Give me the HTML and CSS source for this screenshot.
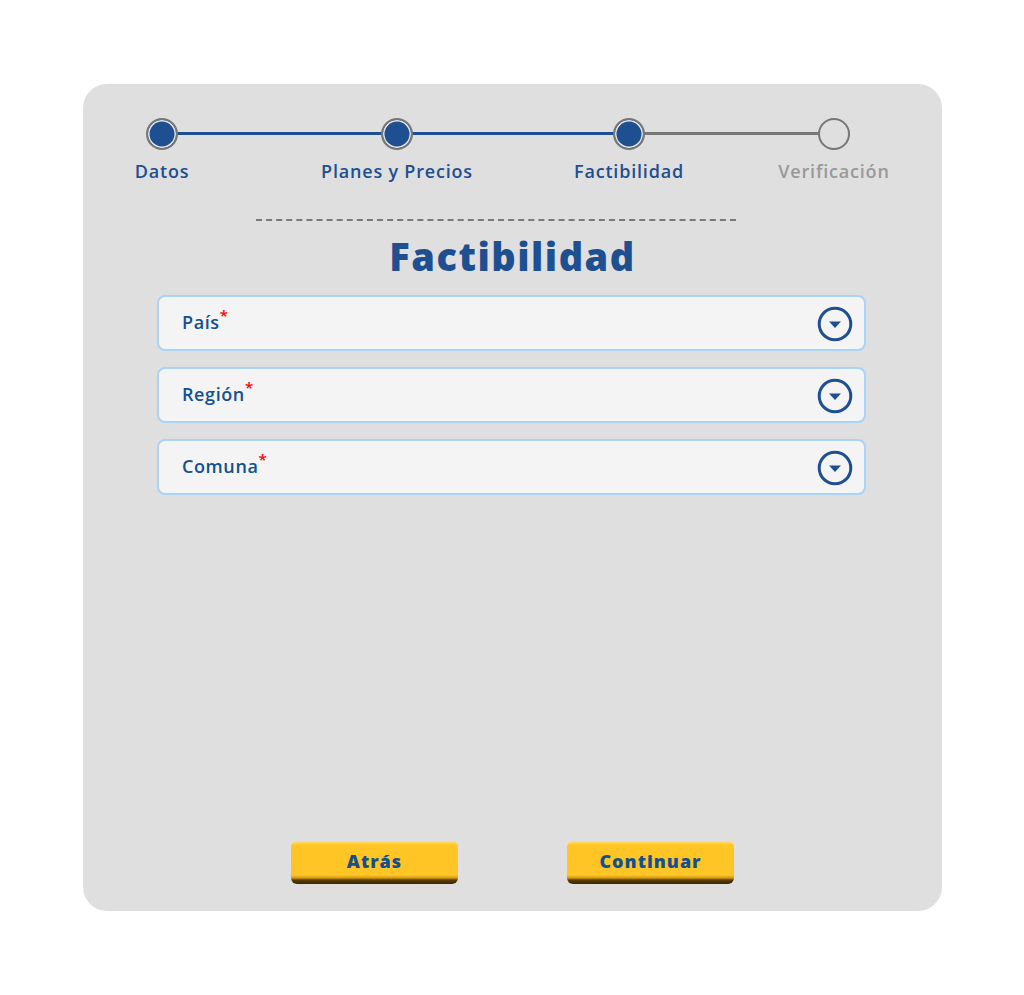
FILE: index.html
```html
<!DOCTYPE html>
<html lang="es">
<head>
<meta charset="utf-8">
<title>Factibilidad</title>
<link rel="stylesheet" href="styles.css">
</head>
<body>
<div class="card">
  <div class="stepper">
    <div class="track">
      <span class="track-done"></span><span class="track-todo"></span>
    </div>
    <div class="step step-1 done"><span class="dot"></span><span class="label">Datos</span></div>
    <div class="step step-2 done"><span class="dot"></span><span class="label">Planes y Precios</span></div>
    <div class="step step-3 done"><span class="dot"></span><span class="label">Factibilidad</span></div>
    <div class="step step-4"><span class="dot"></span><span class="label">Verificación</span></div>
  </div>
  <div class="divider"></div>
  <h1 class="title">Factibilidad</h1>
  <div class="fields">
    <div class="field"><span class="field-label">País<sup>*</sup></span>
      <svg class="chev" viewBox="0 0 36 36"><circle cx="18" cy="18" r="15.8" fill="none" stroke="#1d4f91" stroke-width="3"/><path d="M12 15.5h12l-6 6.5z" fill="#1d4f91"/></svg>
    </div>
    <div class="field"><span class="field-label">Región<sup>*</sup></span>
      <svg class="chev" viewBox="0 0 36 36"><circle cx="18" cy="18" r="15.8" fill="none" stroke="#1d4f91" stroke-width="3"/><path d="M12 15.5h12l-6 6.5z" fill="#1d4f91"/></svg>
    </div>
    <div class="field"><span class="field-label">Comuna<sup>*</sup></span>
      <svg class="chev" viewBox="0 0 36 36"><circle cx="18" cy="18" r="15.8" fill="none" stroke="#1d4f91" stroke-width="3"/><path d="M12 15.5h12l-6 6.5z" fill="#1d4f91"/></svg>
    </div>
  </div>
  <div class="actions">
    <button class="btn">Atrás</button>
    <button class="btn">Continuar</button>
  </div>
</div>
</body>
</html>
```
FILE: styles.css
```css
* { box-sizing: border-box; }
html, body { margin: 0; padding: 0; background: #fff; }
body {
  font-family: "Open Sans", "Lato", sans-serif;
  padding-top: 84px;
  padding-left: 83px;
}
.card {
  width: 859px;
  height: 827px;
  background: #dfdfdf;
  border-radius: 24px;
  padding: 34px 0 27px;
  display: flex;
  flex-direction: column;
}
.stepper {
  position: relative;
  display: flex;
  margin: 0 0 0 50px;
}
.track {
  position: absolute;
  top: 14px;
  left: 29px;
  height: 3px;
  display: flex;
}
.track-done { width: 467px; height: 3px; background: #1d4f91; }
.track-todo { width: 205px; height: 3px; background: #777; }
.step {
  position: relative;
  display: flex;
  flex-direction: column;
  align-items: center;
  white-space: nowrap;
}
.step-1 { width: 58px; }
.step-2 { width: 160px; margin-left: 126px; }
.step-3 { width: 112px; margin-left: 96px; }
.step-4 { width: 112px; margin-left: 93px; }
.dot {
  width: 32px;
  height: 32px;
  border-radius: 50%;
  border: 2px solid #777;
  background: #dfdfdf;
}
.done .dot {
  background: #1d4f91;
  box-shadow: inset 0 0 0 1.5px #e6e6e6;
}
.label {
  margin-top: 10px;
  font-size: 18px;
  line-height: 22px;
  font-weight: 600;
  color: #1d4f91;
  letter-spacing: 0.8px;
}
.step-4 .label { color: #999; }
.divider {
  width: 480px;
  margin: 37px 0 0 173px;
  border-top: 2px dashed #7a7a7a;
}
.title {
  margin: 12px 0 0;
  text-align: center;
  font-size: 38px;
  line-height: 46px;
  font-weight: 800;
  color: #1d4f91;
  letter-spacing: 1.5px;
}
.fields {
  margin: 16px 0 0 74px;
  width: 709px;
  display: flex;
  flex-direction: column;
  gap: 16px;
}
.field {
  height: 56px;
  border: 2px solid #a9d3f7;
  border-radius: 8px;
  background: #f4f4f4;
  display: flex;
  align-items: center;
  justify-content: space-between;
  padding: 0 11px 0 23px;
}
.field-label {
  font-size: 18px;
  font-weight: 600;
  color: #13508f;
  letter-spacing: 0.6px;
  position: relative;
  top: -1px;
}
.field-label sup {
  color: #f00;
  font-size: 15px;
  line-height: 0;
  margin-left: 0;
  position: relative;
  top: -1px;
}
.chev { width: 36px; height: 36px; display: block; position: relative; top: 1px; }
.actions {
  margin-top: auto;
  display: flex;
  justify-content: center;
  gap: 109px;
}
.btn {
  width: 167px;
  height: 43px;
  border: 0;
  border-radius: 6px;
  padding: 0 0 4px;
  font-family: "Open Sans", sans-serif;
  font-size: 18px;
  font-weight: 800;
  letter-spacing: 1px;
  color: #13508f;
  background: linear-gradient(#ffe07a 0, #ffc625 4px, #ffc425 34px, #d49a10 37px, #5a3d00 39px, #3a2800 43px);
}
```
